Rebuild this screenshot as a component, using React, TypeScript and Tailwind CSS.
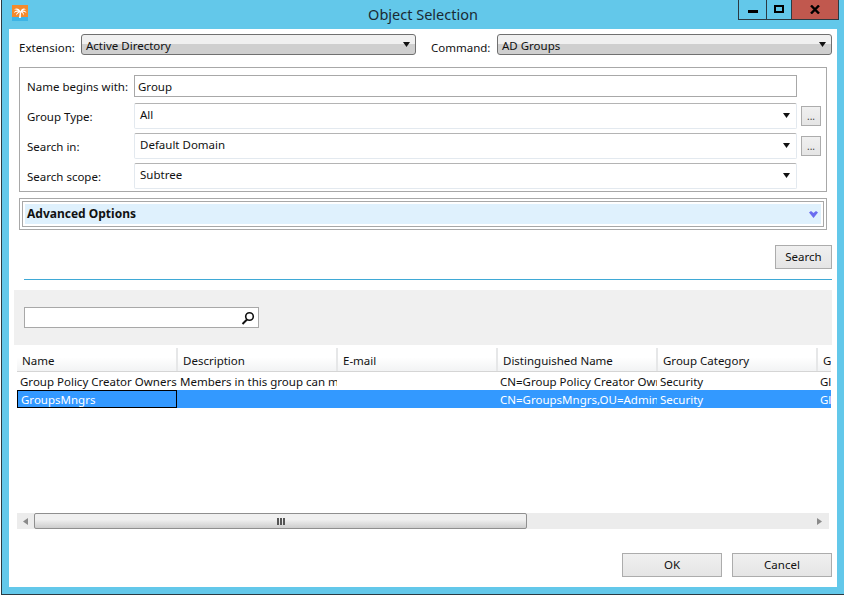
import { ReactNode } from "react";

const columns = ["Name", "Description", "E-mail", "Distinguished Name", "Group Category", "G"];

function Arrow() {
  return (
    <svg width="7" height="5" viewBox="0 0 7 5" className="shrink-0">
      <path d="M0 0H7L3.5 5Z" fill="#111" />
    </svg>
  );
}

function Combo({ value, width }: { value: string; width: string }) {
  return (
    <div className={`${width} h-[21px] flex items-center justify-between pl-[4px] pr-[5px] rounded-[3px] border border-[#707070] bg-gradient-to-b from-[#f0f0f0] from-45% to-[#cfcfcf] to-50%`}>
      <span className="relative top-[1px]">{value}</span>
      <Arrow />
    </div>
  );
}

function FilterRow({ label, value, browse }: { label: string; value: string; browse?: boolean }) {
  return (
    <div className="flex h-[26px] mb-[4px]">
      <div className="w-[107px] pt-[6px] leading-[16px]">{label}</div>
      <div className="w-[663px] h-[26px] flex justify-between pl-[5px] pr-[6px] pt-[3px] border border-[#b4b4b4] border-b-[#e3e9ef] border-r-[#e3e9ef] border-l-[#e3e9ef] rounded-[2px] bg-white">
        <span className="leading-[16px]">{value}</span>
        <span className="pt-[6px]"><Arrow /></span>
      </div>
      {browse && (
        <div className="ml-[4px] mt-[3px] w-[20px] h-[20px] border border-[#acacac] bg-gradient-to-b from-[#f0f0f0] to-[#e5e5e5] flex items-center justify-center text-[10px] leading-[10px] text-[#444]">
          ...
        </div>
      )}
    </div>
  );
}

function Button({ children, width }: { children: ReactNode; width: string }) {
  return (
    <div className={`${width} h-[24px] border border-[#acacac] bg-gradient-to-b from-[#f0f0f0] to-[#e5e5e5] flex items-center justify-center`}>
      {children}
    </div>
  );
}

function Row({ cells, selected }: { cells: string[]; selected?: boolean }) {
  return (
    <div className={`flex h-[18px] leading-[20px] ${selected ? "bg-[#3399ff] text-white" : ""}`}>
      {cells.map((c, i) => (
        <div
          key={i}
          className={`shrink-0 w-[160px] h-[18px] pl-[3px] pr-[3px] overflow-hidden whitespace-nowrap ${selected && i === 0 ? "border border-black pl-[2px] leading-[18px]" : ""}`}
        >
          {c}
        </div>
      ))}
    </div>
  );
}

export default function App() {
  return (
    <div className="w-[845px] h-[596px] bg-white overflow-hidden text-[11.5px] text-[#111] font-['Noto_Sans','Open_Sans',sans-serif]">
      <div className="ml-[1px] w-[843px] h-[595px] border-l border-b border-[#2b3a42] bg-[#63c8ea] pl-[7px] pr-[7px] pb-[7px] flex flex-col">
        {/* title bar */}
        <div className="h-[29px] shrink-0 flex relative">
          <svg width="16" height="16" viewBox="0 0 16 16" className="mt-[5px] ml-[3px]">
            <rect width="16" height="12" fill="#f58a2c" />
            <rect y="12" width="16" height="4" fill="#3db4e6" />
            <path d="M7 13L7.8 7H9L8.8 13ZM8.4 6.5C7.5 3.5 4.5 2.5 2 4.5 3.8 4.2 5 4.6 6 5.6 4 5 2.5 6 1.8 8 3.5 6.8 5 6.4 6.6 6.8 5 7.5 4.2 8.8 4.2 10.5 5.6 8.8 7 7.5 8.4 7 10 7.5 11.2 8.8 11.8 10.5 12.2 8.8 11.5 7.5 10.2 6.8 11.5 6.4 13 6.8 14.4 8 14 6 12.4 5 10.6 5.6 11.5 4.6 12.5 4.2 14 4.5 12 2.5 9.5 3.5 8.4 6.5Z" fill="#fff" />
          </svg>
          <div className="absolute left-0 right-0 top-[4px] text-center text-[14.5px] leading-[20px] text-[#1a2a33]">Object Selection</div>
          <div className="absolute top-0 left-[729px] flex h-[20px] border-l border-b border-r border-[#2b3a42]">
            <div className="w-[28px] flex items-center justify-center border-r border-[#2b3a42]">
              <div className="w-[10px] h-[3px] bg-black mt-[4px]" />
            </div>
            <div className="w-[25px] flex items-center justify-center border-r border-[#2b3a42]">
              <div className="w-[10px] h-[8px] border-2 border-black mb-[2px]" />
            </div>
            <div className="w-[46px] bg-[#c1584e] flex items-center justify-center">
              <svg width="10" height="9" viewBox="0 0 10 9">
                <path d="M1 0.5L9 8.5M9 0.5L1 8.5" stroke="#000" strokeWidth="2.4" />
              </svg>
            </div>
          </div>
        </div>

        {/* client area */}
        <div className="flex-1 bg-white pl-[10px] pr-[5px] flex flex-col">
          <div className="flex items-center h-[21px] mt-[5px]">
            <span className="w-[62px] relative top-[3px]">Extension:</span>
            <Combo value="Active Directory" width="w-[335px]" />
            <span className="ml-[15px] w-[66px] relative top-[3px]">Command:</span>
            <Combo value="AD Groups" width="w-[335px]" />
          </div>

          <div className="w-[808px] h-[125px] mt-[12px] border border-[#a8a8a8] pl-[7px] pt-[7px]">
            <div className="flex h-[22px] mb-[6px]">
              <div className="w-[107px] leading-[24px]">Name begins with:</div>
              <div className="w-[663px] h-[22px] border border-[#a8a8a8] pl-[3px] leading-[22px]">Group</div>
            </div>
            <FilterRow label="Group Type:" value="All" browse />
            <FilterRow label="Search in:" value="Default Domain" browse />
            <FilterRow label="Search scope:" value="Subtree" />
          </div>

          <div className="w-[808px] h-[32px] mt-[6px] border border-[#a8a8a8] p-[2px]">
            <div className="h-[26px] border border-[#a8a8a8] p-[2px]">
              <div className="h-[20px] bg-[#dff1fd] flex items-center justify-between pl-[2px] pr-[3px]">
                <span className="font-bold text-[12px]">Advanced Options</span>
                <svg width="9" height="7" viewBox="0 0 9 7">
                  <path d="M0 1.5L2 0 4.5 2 7 0 9 1.5 4.5 7Z" fill="#6a6cf0" />
                </svg>
              </div>
            </div>
          </div>

          <div className="flex justify-end mt-[15px]">
            <Button width="w-[57px]">Search</Button>
          </div>

          <div className="ml-[5px] h-px mt-[10px] bg-[#3fa9d6]" />

          <div className="-ml-[5px] h-[55px] mt-[10px] bg-[#f0f0f0] pl-[10px] pt-[17px]">
            <div className="w-[235px] h-[21px] border border-[#a8a8a8] bg-white flex items-center justify-end pr-[3px]">
              <svg width="14" height="14" viewBox="0 0 14 14">
                <circle cx="8.5" cy="5.5" r="3.8" fill="none" stroke="#111" strokeWidth="1.6" />
                <path d="M6 8.5L1.5 13" stroke="#111" strokeWidth="2" />
              </svg>
            </div>
          </div>

          {/* results table */}
          <div className="ml-[-2px] w-[814px] mt-[3px] overflow-hidden h-[60px]">
            <div className="flex h-[24px] border-b border-[#d5d5d5] bg-gradient-to-b from-white from-40% to-[#f2f3f4]">
              {columns.map((c, i) => (
                <div key={c} className={`shrink-0 ${i === 0 ? "w-[161px]" : "w-[160px]"} pl-[5px] leading-[26px] border-r-2 border-[#e6e7e8] whitespace-nowrap overflow-hidden`}>
                  {c}
                </div>
              ))}
            </div>
            <Row cells={["Group Policy Creator Owners", "Members in this group can modify", "", "CN=Group Policy Creator Owners", "Security", "Global"]} />
            <Row cells={["GroupsMngrs", "", "", "CN=GroupsMngrs,OU=Admins,DC=", "Security", "Global"]} selected />
          </div>

          <div className="ml-[-2px] w-[812px] h-[16px] mt-[105px] bg-[#ececec] flex items-center">
            <div className="w-[17px] flex justify-center">
              <svg width="5" height="7" viewBox="0 0 5 7"><path d="M5 0V7L0 3.5Z" fill="#8a8a8a" /></svg>
            </div>
            <div className="w-[493px] h-[16px] border border-[#8f8f8f] rounded-[2px] bg-gradient-to-b from-[#f0f0f0] from-40% to-[#cdcdcd] flex items-center justify-center gap-[1px]">
              <div className="w-[2px] h-[7px] bg-[#555]" />
              <div className="w-[2px] h-[7px] bg-[#555]" />
              <div className="w-[2px] h-[7px] bg-[#555]" />
            </div>
            <div className="flex-1 flex justify-end pr-[7px]">
              <svg width="5" height="7" viewBox="0 0 5 7"><path d="M0 0V7L5 3.5Z" fill="#8a8a8a" /></svg>
            </div>
          </div>

          <div className="flex justify-end gap-[10px] mt-[24px]">
            <Button width="w-[100px]">OK</Button>
            <Button width="w-[100px]">Cancel</Button>
          </div>
        </div>
      </div>
    </div>
  );
}
